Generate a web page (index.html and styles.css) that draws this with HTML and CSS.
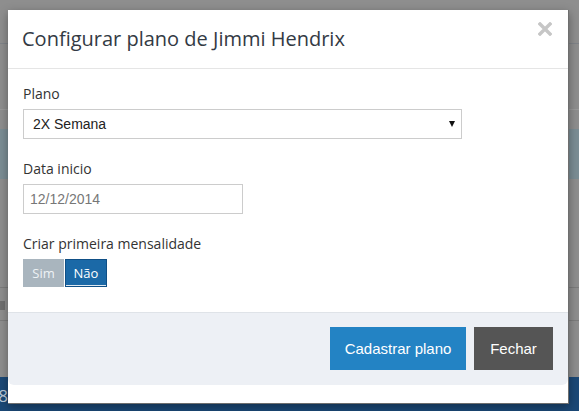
FILE: index.html
```html
<!DOCTYPE html>
<html lang="pt-BR">
<head>
    <meta charset="UTF-8">
    <meta name="viewport" content="width=device-width, initial-scale=1.0">
    <title>Configurar plano</title>
    <link rel="stylesheet" href="styles.css">
</head>
<body>
    <!-- página por trás do modal -->
    <div class="page">
        <div class="page-top"></div>
        <div class="page-row"></div>
        <div class="page-band"></div>
        <div class="page-rows"></div>
        <div class="page-row short"><span class="row-icon"></span></div>
        <div class="page-foot"><span class="foot-num">8</span></div>
    </div>

    <!-- modal de plano -->
    <div class="modal">
        <div class="modal-header">
            <h4 class="modal-title">Configurar plano de Jimmi Hendrix</h4>
            <button class="close" aria-label="Fechar">
                <svg width="14" height="14" viewBox="0 0 14 14">
                    <path d="M2 2 L12 12 M12 2 L2 12" stroke="#c6c6c6" stroke-width="3.4" stroke-linecap="square"/>
                </svg>
            </button>
        </div>

        <div class="modal-body">
            <div class="form-group">
                <label>Plano</label>
                <div class="select-wrap">
                    <select class="field select">
                        <option>2X Semana</option>
                        <option>3X Semana</option>
                        <option>Livre</option>
                    </select>
                </div>
            </div>

            <div class="form-group">
                <label>Data inicio</label>
                <input class="field date" type="text" value="12/12/2014">
            </div>

            <div class="form-group">
                <label>Criar primeira mensalidade</label>
                <div class="toggle">
                    <button class="toggle-btn">Sim</button>
                    <button class="toggle-btn active">Não</button>
                </div>
            </div>
        </div>

        <div class="modal-footer">
            <button class="btn btn-primary">Cadastrar plano</button>
            <button class="btn btn-dark">Fechar</button>
        </div>
    </div>

    <script>
        // alterna Sim / Não
        document.querySelectorAll('.toggle-btn').forEach(btn => {
            btn.addEventListener('click', () => {
                document.querySelectorAll('.toggle-btn').forEach(b => b.classList.remove('active'));
                btn.classList.add('active');
            });
        });
    </script>
</body>
</html>
```

FILE: styles.css
```css
:root {
    --primary: #2383c4;
    --toggle-on: #1b69a7;
    --toggle-off: #a9b5be;
    --footer-bg: #edf0f5;
    --line: #e5e5e5;
}

* {
    box-sizing: border-box;
}

body {
    margin: 0;
    width: 579px;
    height: 411px;
    overflow: hidden;
    background: #8e8e8e;
    font-family: 'Open Sans', sans-serif;
    color: #333;
}

/* fundo */
.page {
    height: 411px;
    display: flex;
    flex-direction: column;
}

.page-top {
    height: 44px;
    border-bottom: 1px solid #7f8388;
}

.page-row {
    height: 66px;
    border-bottom: 1px solid #9a9a9a;
}

.page-band {
    margin-top: 19px;
    height: 50px;
    background: #7b8d94;
}

.page-rows {
    height: 109px;
    border-bottom: 1px solid #7c7c7c;
}

.page-row.short {
    height: 33px;
    border-bottom: 1px solid #7c7c7c;
    padding-top: 13px;
}

.row-icon {
    display: block;
    width: 5px;
    height: 9px;
    background: #6f6f6f;
}

.page-foot {
    flex: 1;
    margin-top: 56px;
    background: #1b4876;
    padding-top: 10px;
    overflow: hidden;
}

.foot-num {
    display: block;
    width: 8px;
    overflow: hidden;
    direction: rtl;
    color: #b8c6d6;
    font-size: 17px;
    line-height: 18px;
}

/* modal */
.modal {
    position: absolute;
    left: 8px;
    top: 10px;
    width: 561px;
    height: 394px;
    background: #fff;
    border: 1px solid #6e6e6e;
    border-left: none;
    border-top: none;
    box-shadow: 0 3px 9px rgba(0, 0, 0, 0.35);
    display: flex;
    flex-direction: column;
}

.modal-header {
    height: 59px;
    padding: 15px 14px;
    border-bottom: 1px solid var(--line);
    display: flex;
    justify-content: space-between;
    align-items: flex-start;
}

.modal-title {
    margin: 0;
    font-size: 20px;
    font-weight: 400;
    line-height: 28px;
    color: #333a44;
}

.close {
    border: none;
    background: none;
    padding: 0;
    margin: -3px 2px 0 0;
    cursor: pointer;
    line-height: 0;
}

.modal-body {
    padding: 15px 15px 0 15px;
    height: 243px;
}

.form-group {
    margin-bottom: 20px;
}

.form-group label {
    display: block;
    font-size: 14px;
    line-height: 20px;
    margin-bottom: 5px;
    color: #333;
}

.field {
    display: block;
    height: 30px;
    border: 1px solid #ccc;
    border-radius: 0;
    background: #fff;
    font-family: 'Liberation Sans', Arial, sans-serif;
    font-size: 14px;
    outline: none;
}

.select-wrap {
    position: relative;
    width: 439px;
}

.select {
    width: 100%;
    appearance: none;
    -webkit-appearance: none;
    padding: 0 9px;
    color: #222;
}

.select-wrap::after {
    content: '';
    position: absolute;
    right: 7px;
    top: 12px;
    border-left: 3.5px solid transparent;
    border-right: 3.5px solid transparent;
    border-top: 6px solid #111;
}

.date {
    width: 220px;
    padding: 0 6px;
    color: #777;
}

.toggle {
    display: flex;
    gap: 1px;
}

.toggle-btn {
    width: 41px;
    height: 28px;
    border: none;
    font-family: 'Open Sans', sans-serif;
    font-size: 13px;
    color: #eef2f5;
    background: var(--toggle-off);
    padding: 0;
    cursor: pointer;
}

.toggle-btn.active {
    width: 42px;
    background: var(--toggle-on);
    border: 1px solid #0f4f86;
    box-shadow: inset 0 -1px 0 #dfe9f2;
    color: #fff;
}

.modal-footer {
    height: 73px;
    border-top: 1px solid #dfe3e8;
    background: var(--footer-bg);
    border-radius: 0 0 6px 6px;
    padding: 14px 15px 0 0;
    display: flex;
    justify-content: flex-end;
    align-items: flex-start;
    gap: 8px;
}

.btn {
    height: 43px;
    border: none;
    border-radius: 0;
    font-family: 'Liberation Sans', Arial, sans-serif;
    font-size: 15px;
    color: #fff;
    cursor: pointer;
}

.btn-primary {
    background: var(--primary);
    width: 136px;
}

.btn-dark {
    background: #555;
    width: 79px;
}
```
